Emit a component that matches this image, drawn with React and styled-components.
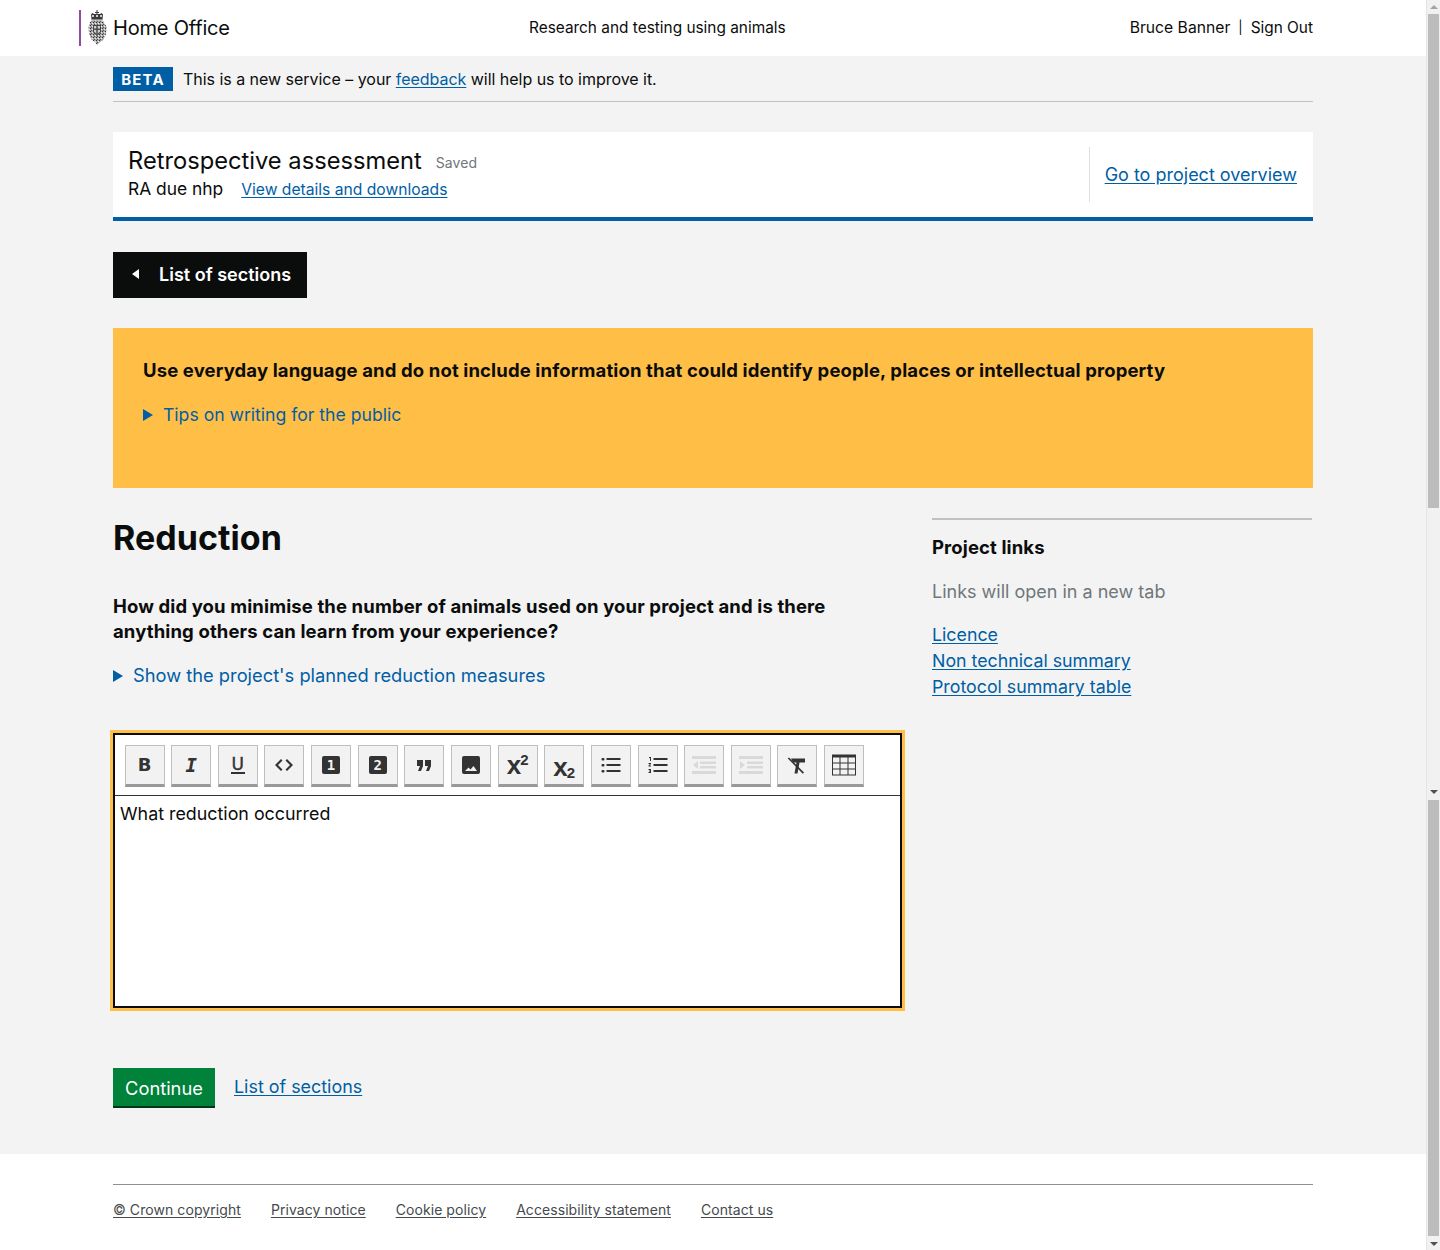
import React from "react";
import styled, { createGlobalStyle } from "styled-components";

const GlobalStyle = createGlobalStyle`
  html, body { margin: 0; padding: 0; height: 1250px; overflow: hidden; }
  body { background: #f3f3f3; color: #0b0c0c; font-family: Inter, "Liberation Sans", sans-serif; }
  * { box-sizing: border-box; }
`;

const Shell = styled.div`
  display: flex;
  height: 1250px;
`;

const Page = styled.div`
  flex: 1;
  min-width: 0;
  display: flex;
  flex-direction: column;
`;

/* scrollbar */
const ScrollBar = styled.div`
  width: 14px;
  flex: none;
  display: flex;
  flex-direction: column;
  align-items: center;
  background: #f1f1f1;
  border-left: 1px solid #e4e4e4;
`;

const ScrollArrow = styled.div`
  width: 0;
  height: 0;
  flex: none;
  margin: ${(p) => p.$margin};
  border-left: 4px solid transparent;
  border-right: 4px solid transparent;
  ${(p) => (p.$up ? "border-bottom" : "border-top")}: 4px solid ${(p) => (p.$up ? "#a3a3a3" : "#505050")};
`;

const ScrollThumb = styled.div`
  width: 11px;
  flex: none;
  height: ${(p) => p.$h}px;
  background: #bcbcbc;
`;

const Gap = styled.div`
  flex: 1;
`;

/* header */
const Header = styled.header`
  height: 56px;
  background: #fff;
  display: flex;
  align-items: center;
  padding: 0 113px 2px 79px;
  font-size: 15.4px;
`;

const Logo = styled.div`
  width: 450px;
  height: 36px;
  margin-top: 2px;
  display: flex;
  align-items: center;
  border-left: 2px solid #8f4aa8;
  padding-left: 6px;
  gap: 6px;
  font-size: 20px;
  letter-spacing: -0.2px;
  color: #0b0c0c;
`;

const ServiceName = styled.div`
  flex: 1;
`;

const UserNav = styled.div`
  display: flex;
  align-items: center;
  gap: 8px;
  font-size: 15.7px;
`;

const NavDivider = styled.span`
  font-size: 13px;
`;

const SignOut = styled.span`
  font-size: 15.4px;
`;

const Container = styled.div`
  width: 1200px;
  margin: 0 auto;
`;

/* beta banner */
const Beta = styled.div`
  display: flex;
  align-items: center;
  gap: 10px;
  height: 46px;
  padding-top: 1px;
  border-bottom: 1px solid #bfc1c3;
  font-size: 16px;
  letter-spacing: -0.03px;
`;

const BetaTag = styled.strong`
  background: #005ea5;
  color: #fff;
  height: 24px;
  width: 60px;
  font-size: 15px;
  font-weight: 700;
  letter-spacing: 1.2px;
  display: flex;
  align-items: center;
  justify-content: center;
`;

const Link = styled.a`
  color: #005ea5;
  text-decoration: underline;
  text-underline-offset: 2px;
  cursor: pointer;
  font-size: ${(p) => p.$size || "inherit"};
`;

/* project panel */
const TitlePanel = styled.section`
  margin-top: 30px;
  height: 89px;
  background: #fff;
  border-bottom: 4px solid #005ea5;
  padding: 15px 16px 15px 15px;
  display: flex;
  justify-content: space-between;
`;

const TitleBlock = styled.div`
  display: flex;
  flex-direction: column;
`;

const TitleRow = styled.div`
  display: flex;
  align-items: baseline;
  gap: 14px;
  height: 28px;
`;

const Title = styled.h2`
  margin: 0;
  font-size: 23.7px;
  font-weight: 400;
  line-height: 28px;
`;

const Saved = styled.span`
  font-size: 14px;
  letter-spacing: 0.05px;
  color: #6f777b;
  position: relative;
  top: -1px;
`;

const MetaRow = styled.div`
  display: flex;
  align-items: baseline;
  gap: 18px;
  margin-top: 2px;
  font-size: 17.4px;
  line-height: 24px;
`;

const OverviewCell = styled.div`
  border-left: 1px solid #dee0e2;
  padding-left: 15px;
  height: 55px;
  display: flex;
  align-items: center;
  font-size: 18px;
`;

const BackButton = styled.button`
  margin-top: 31px;
  display: flex;
  align-items: center;
  height: 46px;
  width: 194px;
  padding: 0 0 1px 19px;
  border: none;
  background: #0b0c0c;
  color: #fff;
  font-family: inherit;
  font-size: 18px;
  font-weight: 600;
`;

const BackArrow = styled.span`
  width: 0;
  height: 0;
  flex: none;
  border-top: 5px solid transparent;
  border-bottom: 5px solid transparent;
  border-right: 7px solid #fff;
  margin-right: 20px;
  margin-bottom: 2px;
`;

/* warning */
const Warning = styled.section`
  margin-top: 30px;
  height: 160px;
  background: #ffbf47;
  padding: 30px;
`;

const WarningText = styled.p`
  margin: 0;
  font-size: 18.5px;
  letter-spacing: 0.13px;
  font-weight: 700;
  line-height: 25px;
`;

const Disclosure = styled.div`
  display: flex;
  align-items: center;
  gap: 10px;
  color: #005ea5;
  font-size: ${(p) => p.$size}px;
  line-height: 25px;
  margin-top: ${(p) => p.$top}px;
`;

const DisclosureArrow = styled.span`
  width: 0;
  height: 0;
  flex: none;
  border-top: 6px solid transparent;
  border-bottom: 6px solid transparent;
  border-left: 10px solid #005ea5;
`;

/* two column content */
const Columns = styled.div`
  display: grid;
  grid-template-columns: 789px 380px;
  column-gap: 30px;
  margin-top: 30px;
`;

const Heading = styled.h1`
  margin: 0;
  font-size: 34px;
  letter-spacing: 0.05px;
  line-height: 40px;
  font-weight: 700;
`;

const Question = styled.h3`
  margin: 36px 0 0;
  font-size: 18.5px;
  letter-spacing: 0.12px;
  line-height: 25px;
  font-weight: 700;
`;

const Editor = styled.div`
  margin-top: 45px;
  height: 275px;
  background: #fff;
  border: 2px solid #0b0c0c;
  outline: 3px solid #ffbf47;
  display: flex;
  flex-direction: column;
`;

const Toolbar = styled.div`
  display: flex;
  gap: 6.65px;
  padding: 10px 9.5px 8px;
  border-bottom: 1px solid #333;
`;

const ToolButton = styled.div`
  width: 40px;
  height: 42px;
  flex: none;
  background: #f2f2f2;
  border: 1px solid #bfbfbf;
  border-bottom: 3px solid #999;
  display: flex;
  align-items: center;
  justify-content: center;
  color: #333;
  font-family: "DejaVu Sans", sans-serif;
  font-weight: 700;
  font-size: 18px;
  line-height: 1;
`;

const SlabGlyph = styled.span`
  font-family: "DejaVu Sans Mono", monospace;
  font-style: italic;
  font-size: 19px;
`;

const UnderGlyph = styled.span`
  font-weight: 400;
  font-size: 17px;
  line-height: 15px;
  width: 14px;
  text-align: center;
  -webkit-text-stroke: 0.4px #333;
  border-bottom: 2px solid #333;
  margin-top: 1px;
`;

const ScriptGlyph = styled.span`
  font-family: "Liberation Sans", sans-serif;
  font-size: 26px;
  display: flex;
  align-items: ${(p) => (p.$sub ? "flex-end" : "flex-start")};
  line-height: 24px;
  height: 24px;
  margin-top: ${(p) => (p.$sub ? 4 : -1)}px;
`;

const ScriptMark = styled.span`
  font-size: 15px;
  line-height: 13px;
  font-weight: 700;
  margin-left: -1px;
`;

const NumberBlock = styled.span`
  width: 18px;
  height: 18px;
  background: #333;
  color: #f2f2f2;
  border-radius: 2px;
  font-family: "DejaVu Sans Mono", monospace;
  font-size: 14px;
  display: flex;
  align-items: center;
  justify-content: center;
`;

const EditorText = styled.div`
  padding: 6px 5px;
  font-size: 17.85px;
  line-height: 24px;
`;

const Actions = styled.div`
  margin-top: 60px;
  display: flex;
  align-items: flex-start;
  gap: 19px;
  font-size: 18px;
`;

const ContinueButton = styled.button`
  width: 102px;
  height: 40px;
  border: none;
  border-bottom: 2px solid #003618;
  background: #00823b;
  color: #fff;
  font-family: inherit;
  font-size: 18.3px;
  padding: 1px 0 0;
`;

const ActionLink = styled(Link)`
  line-height: 37px;
  font-size: 17.9px;
`;

/* sidebar */
const Sidebar = styled.aside`
  border-top: 2px solid #bfc1c3;
  height: 190px;
`;

const SidebarTitle = styled.h3`
  margin: 15px 0 0;
  font-size: 18.5px;
  letter-spacing: 0.12px;
  line-height: 25px;
  font-weight: 700;
`;

const SidebarNote = styled.p`
  margin: 19px 0 0;
  font-size: 18px;
  line-height: 25px;
  color: #6f777b;
`;

const SidebarLinks = styled.div`
  margin-top: 18px;
  display: flex;
  flex-direction: column;
  font-size: 17.8px;
  line-height: 26px;
`;

/* footer */
const Footer = styled.footer`
  margin-top: 46px;
  flex: 1;
  background: #fff;
  padding-top: 30px;
`;

const FooterLinks = styled.nav`
  border-top: 1px solid #8e9092;
  padding-top: 16px;
  display: flex;
  gap: 30px;
  font-size: 14px;
  letter-spacing: 0.07px;
  line-height: 18px;
`;

const FooterLink = styled.a`
  color: #454a4c;
  text-decoration: underline;
  text-underline-offset: 2px;
`;

const Crest = () => (
  <svg width="20" height="36" viewBox="0 0 20 36" aria-hidden="true">
    <defs>
      <pattern id="dither" width="3" height="3" patternUnits="userSpaceOnUse">
        <rect width="3" height="3" fill="#a8a8a8" />
        <rect width="1" height="1" fill="#333" />
        <rect x="2" y="1" width="1" height="1" fill="#eee" />
        <rect x="1" y="2" width="1" height="1" fill="#555" />
      </pattern>
    </defs>
    <path d="M9.500 0h1v2h1.500v1h-1.500v1h2.500l1.500-1 1.500 1.500-.5 5h-11l-.5-5L5.500 3 7 4h2.500V3H8V2h1.500z" fill="#3a3a3a" />
    <rect x="5" y="5" width="2" height="2" fill="#ccc" />
    <rect x="9" y="5" width="2" height="2" fill="#ccc" />
    <rect x="13" y="5" width="2" height="2" fill="#ccc" />
    <rect x="4.500" y="9" width="11" height="1.500" fill="#888" />
    <path d="M3 12 6 10.500h8l3 1.500 2.500 5-.5 7-3 6-3.500 2.500L10 35l-1.500-2.500L5 30l-3-6-.5-7z" fill="url(#dither)" />
    <path d="M6 15h8v7l-4 4-4-4z" fill="#444" />
    <path d="M7 16h6v5.500l-3 3-3-3z" fill="#cfcfcf" />
    <rect x="9.300" y="16" width="1.400" height="8" fill="#444" />
    <rect x="7" y="18.500" width="6" height="1.400" fill="#444" />
  </svg>
);

const Blocks = ({ color = "#333", children }) => (
  <svg width="24" height="24" viewBox="0 0 24 24" fill={color} aria-hidden="true">
    {children}
  </svg>
);

const icons = [
  <span key="b">B</span>,
  <SlabGlyph key="i">I</SlabGlyph>,
  <UnderGlyph key="u">U</UnderGlyph>,
  <Blocks key="code">
    <path d="M9 6 3 12l6 6 1.500-1.500L6 12l4.500-4.500zM15 6l6 6-6 6-1.500-1.500L18 12l-4.500-4.500z" />
  </Blocks>,
  <NumberBlock key="h1">1</NumberBlock>,
  <NumberBlock key="h2">2</NumberBlock>,
  <Blocks key="quote">
    <path d="M5 7h6v6l-2 5H6l2-5H5zM13 7h6v6l-2 5h-3l2-5h-3z" />
  </Blocks>,
  <Blocks key="image">
    <path fillRule="evenodd" d="M5 3h14a2 2 0 0 1 2 2v14a2 2 0 0 1-2 2H5a2 2 0 0 1-2-2V5a2 2 0 0 1 2-2zm1 15h12l-3.500-5-3 3.500-2-2z" />
  </Blocks>,
  <ScriptGlyph key="sup">x<ScriptMark>2</ScriptMark></ScriptGlyph>,
  <ScriptGlyph key="sub" $sub>x<ScriptMark>2</ScriptMark></ScriptGlyph>,
  <Blocks key="ul">
    <rect x="2.500" y="5" width="3" height="2.500" rx="1" />
    <rect x="2.500" y="11" width="3" height="2.500" rx="1" />
    <rect x="2.500" y="17" width="3" height="2.500" rx="1" />
    <rect x="7.500" y="5" width="14" height="2" />
    <rect x="7.500" y="11" width="14" height="2" />
    <rect x="7.500" y="17" width="14" height="2" />
  </Blocks>,
  <Blocks key="ol">
    <path d="M3 4h2v4H4V5H3zM2.500 10H5v1l-1.500 1.500H5v1H2.500v-1L4 11H2.500zM2.500 16H5v4H2.500v-1H4v-.5H3v-1h1V17H2.500z" />
    <rect x="7.500" y="5" width="14" height="2" />
    <rect x="7.500" y="11" width="14" height="2" />
    <rect x="7.500" y="17" width="14" height="2" />
  </Blocks>,
  <Blocks key="outdent" color="#d9d9d9">
    <rect x="0" y="3" width="24" height="3" />
    <rect x="8" y="8.500" width="16" height="2.500" />
    <rect x="8" y="13" width="16" height="2.500" />
    <rect x="0" y="18" width="24" height="3" />
    <path d="M6 8v8l-5-4z" />
  </Blocks>,
  <Blocks key="indent" color="#d9d9d9">
    <rect x="0" y="3" width="24" height="3" />
    <rect x="8" y="8.500" width="16" height="2.500" />
    <rect x="8" y="13" width="16" height="2.500" />
    <rect x="0" y="18" width="24" height="3" />
    <path d="M1 8v8l5-4z" />
  </Blocks>,
  <Blocks key="clear">
    <path d="M6 5.500h14v4h-5.500L12.500 20.500H9.500L11.500 9.500H8z" />
    <path d="M2.800 5.500 4 4.500 19 19.500l-1.200 1.200z" />
  </Blocks>,
  <Blocks key="table">
    <path fillRule="evenodd" d="M0 1.500h24v21H0zM1 4.500v5h6.500v-5zm7.500 0v5h7v-5zm8 0v5H23v-5zM1 10.500v5h6.500v-5zm7.500 0v5h7v-5zm8 0v5H23v-5zM1 16.500v5h6.500v-5zm7.500 0v5h7v-5zm8 0v5H23v-5z" />
  </Blocks>,
];

const projectLinks = ["Licence", "Non technical summary", "Protocol summary table"];
const footerLinks = ["© Crown copyright", "Privacy notice", "Cookie policy", "Accessibility statement", "Contact us"];

export default function App() {
  return (
    <Shell>
      <GlobalStyle />
      <Page>
        <Header>
          <Logo>
            <Crest />
            <span>Home Office</span>
          </Logo>
          <ServiceName>Research and testing using animals</ServiceName>
          <UserNav>
            <span>Bruce Banner</span>
            <NavDivider>|</NavDivider>
            <SignOut>Sign Out</SignOut>
          </UserNav>
        </Header>
        <Container>
          <Beta>
            <BetaTag>BETA</BetaTag>
            <span>
              This is a new service – your <Link>feedback</Link> will help us to improve it.
            </span>
          </Beta>
          <TitlePanel>
            <TitleBlock>
              <TitleRow>
                <Title>Retrospective assessment</Title>
                <Saved>Saved</Saved>
              </TitleRow>
              <MetaRow>
                <span>RA due nhp</span>
                <Link $size="15.65px">View details and downloads</Link>
              </MetaRow>
            </TitleBlock>
            <OverviewCell>
              <Link>Go to project overview</Link>
            </OverviewCell>
          </TitlePanel>
          <BackButton>
            <BackArrow />
            List of sections
          </BackButton>
          <Warning>
            <WarningText>
              Use everyday language and do not include information that could identify people, places or intellectual property
            </WarningText>
            <Disclosure $top={19} $size={17.6}>
              <DisclosureArrow />
              Tips on writing for the public
            </Disclosure>
          </Warning>
          <Columns>
            <div>
              <Heading>Reduction</Heading>
              <Question>
                How did you minimise the number of animals used on your project and is there anything others can learn from your experience?
              </Question>
              <Disclosure $top={19} $size={18.3}>
                <DisclosureArrow />
                Show the project's planned reduction measures
              </Disclosure>
              <Editor>
                <Toolbar>
                  {icons.map((icon) => (
                    <ToolButton key={icon.key}>{icon}</ToolButton>
                  ))}
                </Toolbar>
                <EditorText>What reduction occurred</EditorText>
              </Editor>
              <Actions>
                <ContinueButton>Continue</ContinueButton>
                <ActionLink>List of sections</ActionLink>
              </Actions>
            </div>
            <Sidebar>
              <SidebarTitle>Project links</SidebarTitle>
              <SidebarNote>Links will open in a new tab</SidebarNote>
              <SidebarLinks>
                {projectLinks.map((label) => (
                  <div key={label}>
                    <Link>{label}</Link>
                  </div>
                ))}
              </SidebarLinks>
            </Sidebar>
          </Columns>
        </Container>
        <Footer>
          <Container>
            <FooterLinks>
              {footerLinks.map((label) => (
                <FooterLink key={label}>{label}</FooterLink>
              ))}
            </FooterLinks>
          </Container>
        </Footer>
      </Page>
      <ScrollBar>
        <ScrollArrow $up $margin="5px 0 5px" />
        <ScrollThumb $h={494} />
        <Gap />
        <ScrollArrow $margin="0 0 6px" />
        <ScrollThumb $h={436} />
        <ScrollArrow $margin="6px 0 4px" />
      </ScrollBar>
    </Shell>
  );
}
